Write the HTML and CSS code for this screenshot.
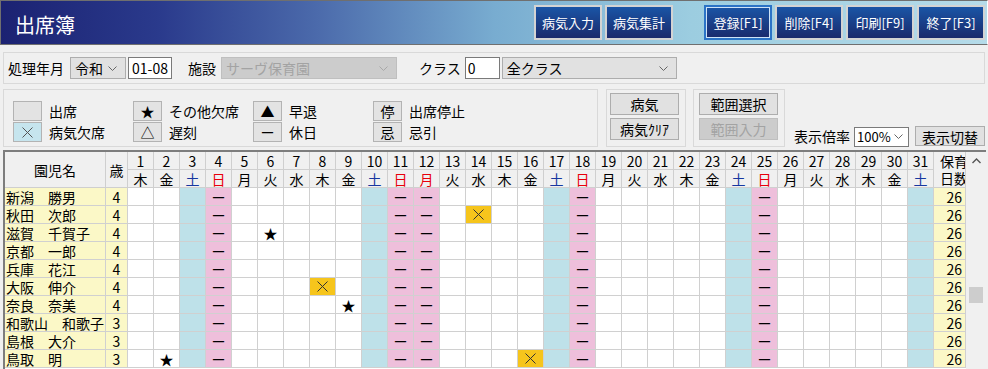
FILE: index.html
```html
<!DOCTYPE html>
<html lang="ja">
<head>
    <meta charset="UTF-8">
    <meta name="viewport" content="width=device-width, initial-scale=1.0">
    <title>出席簿</title>
    <link rel="stylesheet" href="styles.css">
</head>
<body>
    <header class="title-bar">
        <h1 class="title">出席簿</h1>
        <div class="title-buttons">
            <button class="nav-btn">病気入力</button>
            <button class="nav-btn">病気集計</button>
            <button class="nav-btn focus">登録[F1]</button>
            <button class="nav-btn">削除[F4]</button>
            <button class="nav-btn">印刷[F9]</button>
            <button class="nav-btn">終了[F3]</button>
        </div>
    </header>

    <section class="filter">
        <label class="lbl">処理年月</label>
        <div class="combo era">
            <span>令和</span>
            <svg class="chev" width="9" height="5" viewBox="0 0 9 5"><path d="M.5.5l4 4 4-4" fill="none" stroke="#666"/></svg>
        </div>
        <input class="txt month" type="text" value="01-08">
        <label class="lbl facility-lbl">施設</label>
        <div class="combo facility disabled">
            <span>サーヴ保育園</span>
            <svg class="chev" width="9" height="5" viewBox="0 0 9 5"><path d="M.5.5l4 4 4-4" fill="none" stroke="#a8a8a8"/></svg>
        </div>
        <label class="lbl class-lbl">クラス</label>
        <input class="txt class-no" type="text" value="0">
        <div class="combo class-sel">
            <span>全クラス</span>
            <svg class="chev" width="9" height="5" viewBox="0 0 9 5"><path d="M.5.5l4 4 4-4" fill="none" stroke="#666"/></svg>
        </div>
    </section>

    <section class="tools">
        <div class="legend">
            <div class="item"><span class="sw"></span>出席</div>
            <div class="item"><span class="sw">★</span>その他欠席</div>
            <div class="item"><span class="sw">▲</span>早退</div>
            <div class="item"><span class="sw">停</span>出席停止</div>
            <div class="item">
                <span class="sw sick"><svg width="11" height="11" viewBox="0 0 11 11"><path d="M.5.5l10 10M10.5.5l-10 10" stroke="#555" fill="none"/></svg></span>病気欠席
            </div>
            <div class="item"><span class="sw">△</span>遅刻</div>
            <div class="item"><span class="sw">ー</span>休日</div>
            <div class="item"><span class="sw">忌</span>忌引</div>
        </div>

        <div class="group sick-group">
            <button class="btn">病気</button>
            <button class="btn">病気ｸﾘｱ</button>
        </div>

        <div class="group range-group">
            <button class="btn">範囲選択</button>
            <button class="btn" disabled>範囲入力</button>
        </div>

        <div class="zoom">
            <span>表示倍率</span>
            <div class="combo rate">
                <span>100%</span>
                <svg class="chev" width="9" height="5" viewBox="0 0 9 5"><path d="M.5.5l4 4 4-4" fill="none" stroke="#666"/></svg>
            </div>
            <button class="btn switch">表示切替</button>
        </div>
    </section>

    <section class="sheet">
        <div class="grid" id="grid"></div>
        <div class="vscroll">
            <svg class="up" width="9" height="6" viewBox="0 0 9 6"><path d="M.5 5l4-4 4 4" fill="none" stroke="#555" stroke-width="1.4"/></svg>
            <div class="thumb"></div>
        </div>
    </section>

    <!-- 出席表の組み立て -->
    <script>
        const grid = document.getElementById('grid');
        const youbi = ['日', '月', '火', '水', '木', '金', '土'];
        const kyujitsu = [11, 12]; // 山の日・振替休日
        const crossSvg = '<svg width="11" height="11" viewBox="0 0 11 11"><path d="M.5.5l10 10M10.5.5l-10 10" stroke="#333" fill="none"/></svg>';

        const kids = [
            ['新潟　勝男', 4, {}],
            ['秋田　次郎', 4, { 14: 'sick' }],
            ['滋賀　千賀子', 4, { 6: 'star' }],
            ['京都　一郎', 4, {}],
            ['兵庫　花江', 4, {}],
            ['大阪　伸介', 4, { 8: 'sick' }],
            ['奈良　奈美', 4, { 9: 'star' }],
            ['和歌山　和歌子', 3, {}],
            ['島根　大介', 3, {}],
            ['鳥取　明', 3, { 2: 'star', 16: 'sick' }]
        ];

        function dayType(d) {
            const w = (d + 3) % 7; // 1日は木曜
            if (w === 0 || kyujitsu.includes(d)) return 'off';
            if (w === 6) return 'sat';
            return '';
        }

        function cell(html, cls) {
            const div = document.createElement('div');
            div.className = 'cell ' + (cls || '');
            div.innerHTML = html;
            grid.appendChild(div);
        }

        cell('園児名', 'head name-head');
        cell('歳', 'head age-head');
        for (let d = 1; d <= 31; d++) cell(d, 'head');
        cell('<span>保育</span><span>日数</span>', 'head total-head');
        for (let d = 1; d <= 31; d++) {
            const t = dayType(d);
            cell(youbi[(d + 3) % 7], 'head ' + (t === 'off' ? 'red' : t === 'sat' ? 'blue' : ''));
        }

        kids.forEach(function(k) {
            cell(k[0], 'name');
            cell(k[1], 'age');
            for (let d = 1; d <= 31; d++) {
                const t = dayType(d);
                const mark = k[2][d];
                if (t === 'off') cell('ー', 'off');
                else if (t === 'sat') cell('', 'sat');
                else if (mark === 'sick') cell(crossSvg, 'sick');
                else if (mark === 'star') cell('★', 'star');
                else cell('', '');
            }
            cell('26', 'total');
        });
    </script>
</body>
</html>
```

FILE: styles.css
```css
:root {
    --bg: #f0f0f0;
    --line: #d0d0d0;
    --frame: #d9d9d9;
    --btn: #e1e1e1;
    --btn-border: #adadad;
    --sat: #bee1e9;
    --sun: #eebfdb;
    --name: #fbf8c7;
    --sick: #f6c51c;
}

* {
    box-sizing: border-box;
}

body {
    margin: 0;
    width: 988px;
    height: 369px;
    overflow: hidden;
    background: var(--bg);
    color: #000;
    font-family: "Noto Sans CJK JP", "Noto Sans", sans-serif;
    font-size: 14px;
    line-height: 1.2;
}

button,
input {
    font-family: inherit;
    font-size: 14px;
    color: #000;
}

/* タイトルバー */
.title-bar {
    display: flex;
    align-items: center;
    height: 45px;
    padding: 0 2px 0 14px;
    border: 1px solid #6f6f6f;
    border-right-color: #fff;
    background: linear-gradient(to right, #1b2272 0%, #2a3a8c 16%, #4b6aab 32%, #78acd0 50%, #9ccde0 70%, #b5dbe9 100%);
}

.title {
    flex: 1;
    margin: 0;
    padding-top: 4px;
    color: #fff;
    font-size: 20px;
    font-weight: normal;
    line-height: 1;
}

.title-buttons {
    display: flex;
    gap: 3px;
}

.nav-btn {
    width: 68px;
    height: 35px;
    padding: 0;
    border: 2px solid #d3d3d3;
    background: linear-gradient(#1a55a6, #1a2a6c);
    color: #fff;
    font-size: 13px;
}

.nav-btn.focus {
    margin-left: 28px;
    border-color: #2b73c6;
    box-shadow: inset 0 0 0 1px #cfe3f7;
}

/* 条件 */
.filter {
    display: flex;
    align-items: center;
    height: 32px;
    margin: 7px 3px 0;
    padding-left: 4px;
    border: 1px solid var(--frame);
}

.combo {
    display: flex;
    align-items: center;
    height: 22px;
    padding-left: 4px;
    background: var(--btn);
    border: 1px solid var(--btn-border);
    white-space: nowrap;
}

.combo .chev {
    margin-left: auto;
    margin-right: 8px;
}

.combo.disabled {
    background: #cccccc;
    border-color: #bfbfbf;
    color: #a3a3a3;
}

.txt {
    height: 22px;
    padding: 0 3px;
    border: 1px solid #7a7a7a;
    background: #fff;
    outline: none;
}

.era {
    width: 56px;
    margin-left: 6px;
}

.month {
    width: 44px;
    margin-left: 2px;
    text-align: center;
}

.facility-lbl {
    margin-left: 16px;
}

.facility {
    width: 176px;
    margin-left: 5px;
}

.class-lbl {
    margin-left: 22px;
}

.class-no {
    width: 35px;
    margin-left: 4px;
    padding-left: 2px;
}

.class-sel {
    width: 175px;
    margin-left: 2px;
}

/* 凡例とボタン */
.tools {
    display: flex;
    height: 58px;
    margin: 5px 3px 0;
}

.legend {
    display: grid;
    grid-template-columns: repeat(4, 120px);
    grid-auto-rows: 20px;
    row-gap: 1px;
    width: 595px;
    padding: 11px 0 0 9px;
    border: 1px solid var(--frame);
}

.item {
    display: flex;
    align-items: center;
    gap: 7px;
    white-space: nowrap;
}

.sw {
    display: flex;
    align-items: center;
    justify-content: center;
    width: 29px;
    height: 20px;
    background: #e3e3e3;
    border: 1px solid #b3b3b3;
    line-height: 1;
}

.sw.sick {
    background: #c6e5ee;
}

.group {
    display: flex;
    flex-direction: column;
    gap: 3px;
    padding: 3px;
    border: 1px solid var(--frame);
}

.sick-group {
    width: 80px;
    margin-left: 8px;
}

.range-group {
    width: 92px;
    margin-left: 7px;
    padding: 3px 5px;
}

.btn {
    height: 22px;
    padding: 0;
    background: var(--btn);
    border: 1px solid var(--btn-border);
    white-space: nowrap;
}

.sick-group .btn {
    width: 69px;
}

.range-group .btn {
    width: 79px;
}

.btn:disabled {
    background: #cccccc;
    border-color: #bfbfbf;
    color: #a3a3a3;
}

.zoom {
    display: flex;
    align-items: center;
    align-self: flex-end;
    margin-left: 9px;
}

.rate {
    width: 55px;
    height: 20px;
    margin-left: 4px;
    padding-left: 2px;
    background: #fff;
    border-color: #7a7a7a;
    font-size: 13px;
}

.rate .chev {
    margin-right: 5px;
}

.switch {
    width: 70px;
    height: 20px;
    margin-left: 6px;
    margin-bottom: 1px;
}

/* 出席表 */
.sheet {
    display: flex;
    height: 219px;
    margin: 3px 2px 0 3px;
    border-top: 2px solid #7d7d7d;
    border-left: 2px solid #7d7d7d;
}

.grid {
    display: grid;
    grid-template-columns: 101px 22px repeat(31, 26px) 32px;
    grid-auto-rows: 18px;
    align-content: start;
    background: #fff;
}

.cell {
    display: flex;
    align-items: center;
    justify-content: center;
    border-right: 1px solid var(--line);
    border-bottom: 1px solid var(--line);
    line-height: 1;
    white-space: nowrap;
    overflow: hidden;
}

.head {
    background: var(--bg);
    border-color: #cfcfcf;
}

.name-head,
.age-head,
.total-head {
    grid-row: span 2;
}

.total-head {
    flex-direction: column;
    align-items: flex-start;
    gap: 3px;
    padding-left: 6px;
}

.red {
    color: #e8000b;
}

.blue {
    color: #1737a0;
}

.name {
    justify-content: flex-start;
    padding-left: 1px;
    background: var(--name);
}

.age {
    background: var(--name);
}

.sat {
    background: var(--sat);
}

.off {
    background: var(--sun);
}

.sick {
    background: var(--sick);
}

.star {
    font-size: 14px;
}

.total {
    justify-content: flex-end;
    padding-right: 3px;
    background: var(--name);
}

.vscroll {
    display: flex;
    flex-direction: column;
    align-items: center;
    width: 20px;
    background: var(--bg);
}

.vscroll .up {
    margin-top: 6px;
}

.thumb {
    width: 14px;
    height: 16px;
    margin-top: 123px;
    background: #cdcdcd;
}
```
